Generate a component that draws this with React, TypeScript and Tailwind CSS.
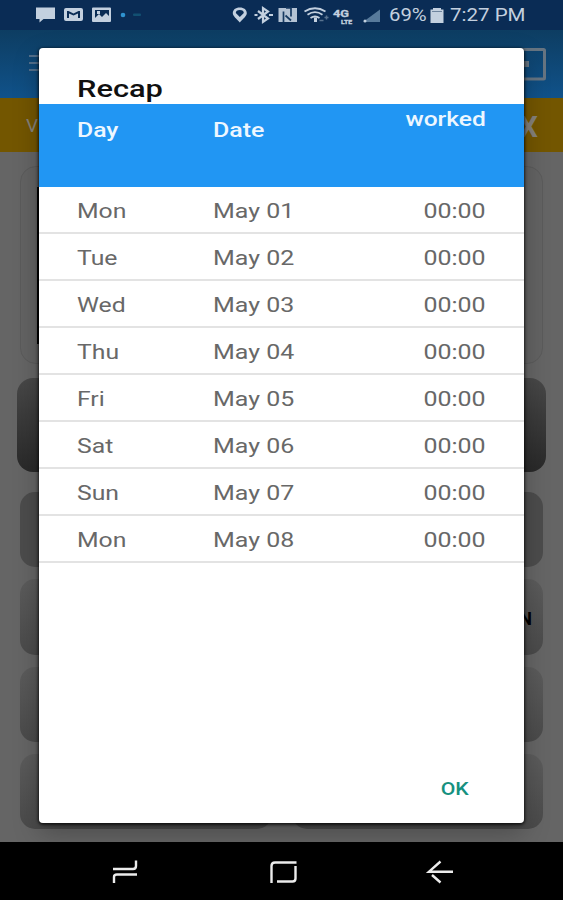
import React from "react";

const rows = [
  ["Mon", "May 01", "00:00"],
  ["Tue", "May 02", "00:00"],
  ["Wed", "May 03", "00:00"],
  ["Thu", "May 04", "00:00"],
  ["Fri", "May 05", "00:00"],
  ["Sat", "May 06", "00:00"],
  ["Sun", "May 07", "00:00"],
  ["Mon", "May 08", "00:00"],
];

function StatusBar() {
  return (
    <div className="flex h-[30px] shrink-0 items-center bg-[#0a2c55] text-[#c3d0df]">
      <svg width="380" height="30" viewBox="0 0 380 30" fill="none" className="shrink-0">
        <g fill="currentColor">
          <path d="M36 7.500h19v11.500H43.500l-4 3.500V19H36z" />
          <path fillRule="evenodd" d="M66 8h15q2 0 2 2v9q0 2-2 2H66q-2 0-2-2v-9q0-2 2-2zm1 3v7h2v-4.500l4.500 2 4.500-2v4.500h2v-7h-1.500l-5 2.500-5-2.500z" />
          <path fillRule="evenodd" d="M93 7.500h17q1 0 1 1v12.500q0 1-1 1H93q-1 0-1-1V8.500q0-1 1-1zm2 2.500v8l4-4 3 3 4-4 3 3v-6zm2 1h3v3h-3z" />
          <circle cx="123" cy="15" r="2.300" fill="#2f93cf" />
          <rect x="133" y="13.500" width="8" height="2.500" rx="1" fill="#125072" />
          <path fillRule="evenodd" d="M239.800 7.500c4.400 0 7 2.300 7 5.800 0 3-3.500 5-7 9.200-3.500-4.200-7-6.200-7-9.200 0-3.500 2.600-5.800 7-5.800zm0 2.500q-4 0-4 3l4 4 4-4q0-3-4-3z" />
          <path d="M278.500 8h18.500v14h-18.500z" opacity=".92" />
          <path d="M363 22l19-14v14z" fill="#587a9b" />
          <circle cx="365" cy="21" r="1.500" />
        </g>
        <path d="M283.500 22V11.500M286 8h5v8.500M285.500 15.500l5.500 5" stroke="#173a61" strokeWidth="1.700" />
        <path d="M258 11l10 7.500-5 3.500V8l5 3.500-10 7.500M254.500 15h3m11.500 0h4" stroke="currentColor" strokeWidth="2.200" />
        <g stroke="currentColor" strokeWidth="1.800">
          <path d="M304.500 11.500q10.500-6.500 21 0M307.500 14.700q7.500-5 15 0M310.500 18q4.500-3 9 0" />
          <path d="M315.500 17.500v4.500" strokeWidth="3" />
          <path d="M319.500 20.500h4m3-5v4m-2-2h4" stroke="#58728f" strokeWidth="1.500" />
        </g>
        <g fill="currentColor" stroke="currentColor" strokeWidth=".3" fontFamily="Roboto, sans-serif" fontWeight="700">
          <text x="333" y="17" fontSize="9" textLength="16" lengthAdjust="spacingAndGlyphs">4G</text>
          <text x="341" y="24" fontSize="5" textLength="11" lengthAdjust="spacingAndGlyphs">LTE</text>
        </g>
      </svg>
      <span className="ml-[9px] w-[38px] pt-px text-[19px]"><span className="inline-block origin-left scale-x-[1.07]">69%</span></span>
      <svg width="14" height="17" viewBox="0 0 14 17" className="ml-[3px] shrink-0">
        <path d="M3 1h8v1.500h2.500V16H.5V2.500H3z" fill="currentColor" />
        <path d="M2 4.500h10" stroke="#6e849e" />
      </svg>
      <span className="ml-[6px] pt-px text-[19px] whitespace-nowrap"><span className="inline-block origin-left scale-x-[1.08]">7:27 PM</span></span>
    </div>
  );
}

function Backdrop() {
  return (
    <div className="flex h-[842px] flex-col bg-[#656565]">
      <StatusBar />
      <div className="flex h-[68px] shrink-0 items-start justify-between bg-linear-to-b from-[#0d3d62] to-[#10528a] pr-[17px] pl-[29px]">
        <svg width="22" height="18" viewBox="0 0 22 18" className="mt-[24px]">
          <path d="M0 2h22M0 9h22M0 16h22" stroke="#526f8b" strokeWidth="2" />
        </svg>
        <svg width="42" height="33" viewBox="0 0 42 33" className="mt-[18px]">
          <rect x="2" y="1.500" width="38.500" height="29.500" rx="1" fill="none" stroke="#677582" strokeWidth="3" />
          <path d="M12 16h13" stroke="#677582" strokeWidth="6" />
        </svg>
      </div>
      <div className="flex h-[54px] shrink-0 items-center justify-between bg-[#735600] pr-[25px] pl-[26px] text-[#85817a]">
        <span className="pt-0.5 text-[19px]">V</span>
        <span className="pt-[5px] text-[29px] font-bold">X</span>
      </div>
      <div className="flex flex-col px-[20px] pt-[14px]">
        <div className="h-[198px] rounded-[16px] border border-[#5b5b5b] bg-[#636363] py-[20px] pl-[16px]">
          <div className="h-[157px] w-4 bg-black" />
        </div>
        <div className="-mx-[3px] mt-[14px] h-[94px] rounded-[16px] bg-linear-to-b from-[#484848] to-[#292929]" />
        <div className="mt-[20px] grid grid-cols-2 gap-x-[20px] gap-y-[12px]">
          {Array.from({ length: 8 }).map((_, i) => (
            <div
              key={i}
              className={
                "flex h-[75.300px] items-center justify-end rounded-[15px] pt-[3px] pr-[11px] text-[18px] font-bold text-black " +
                (i < 2 ? "bg-[#4c4c4c]" : "bg-linear-to-b from-[#5c5c5c] to-[#4a4a4a]")
              }
            >
              {i === 3 ? "N" : ""}
            </div>
          ))}
        </div>
      </div>
    </div>
  );
}

function NavBar() {
  return (
    <div className="flex h-[58px] justify-between bg-black pt-[15px] pr-[106px] pl-[109px]">
      <svg width="32" height="30" viewBox="0 0 32 30" fill="none" stroke="#ececec" strokeWidth="2.400">
        <path d="M4 12h20q3 0 3-3V3.500M5 26v-6q0-2.500 3-2.500h20" />
      </svg>
      <svg width="32" height="30" viewBox="0 0 32 30" fill="none" stroke="#ececec" strokeWidth="2.400">
        <path d="M4.500 26V9q0-3.500 3.500-3.500H29.500M28.500 9v12.500q0 3-3 3H10" />
      </svg>
      <svg width="32" height="30" viewBox="0 0 32 30" fill="none" stroke="#ececec" strokeWidth="2.400">
        <path d="M15.500 4.500L4 14.700h24M7 18l8.500 7.500" />
      </svg>
    </div>
  );
}

function RecapDialog() {
  return (
    <div className="absolute top-[48px] left-[39px] flex h-[775px] w-[485px] flex-col overflow-hidden rounded-[4px] bg-white">
      <div className="h-[56px] shrink-0 pt-[28px] pl-[38px] text-[23px] leading-[28px] font-medium text-[#101010]">
        <span className="inline-block origin-left scale-x-[1.34]">Recap</span>
      </div>
      <div className="flex h-[83px] shrink-0 bg-[#2196f3] pr-[38px] pl-[38px] text-[19.500px] leading-[24px] font-medium text-[#edf7ff]">
        <div className="w-[136px] pt-[15px]"><span className="inline-block origin-left scale-x-[1.27]">Day</span></div>
        <div className="flex-1 pt-[15px]"><span className="inline-block origin-left scale-x-[1.28]">Date</span></div>
        <div className="pt-[4px]"><span className="inline-block origin-right scale-x-[1.26]">worked</span></div>
      </div>
      {rows.map(([day, date, time], i) => (
        <div key={i} className="flex h-[47px] shrink-0 items-center border-b-2 border-[#e3e3e3] px-[38px] pt-[5px] text-[19.500px] leading-[24px] text-[#686868]">
          <div className="w-[136px]"><span className="inline-block origin-left scale-x-[1.27]">{day}</span></div>
          <div className="flex-1"><span className="inline-block origin-left scale-x-[1.28]">{date}</span></div>
          <div><span className="inline-block origin-right scale-x-[1.28]">{time}</span></div>
        </div>
      ))}
      <div className="mt-auto mr-[55px] mb-[22px] self-end text-[18px] leading-[24px] font-medium text-[#16917f]">
        <span className="inline-block origin-right scale-x-[1.18]">OK</span>
      </div>
    </div>
  );
}

export default function App() {
  return (
    <div className="relative h-[900px] w-[563px] overflow-hidden bg-black font-['Roboto',sans-serif]">
      <div className="relative h-[842px] overflow-hidden">
        <Backdrop />
        <div className="absolute top-[48px] left-[39px] h-[775px] w-[485px] rounded-[4px] shadow-[0_1px_3px_1px_rgba(0,0,0,0.7),0_10px_26px_rgba(0,0,0,0.26)]" />
        <RecapDialog />
      </div>
      <NavBar />
    </div>
  );
}
